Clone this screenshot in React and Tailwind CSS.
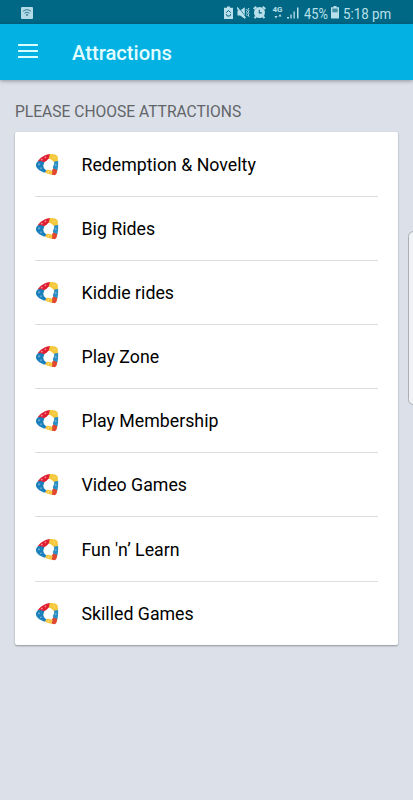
const attractions = [
  "Redemption & Novelty",
  "Big Rides",
  "Kiddie rides",
  "Play Zone",
  "Play Membership",
  "Video Games",
  "Fun 'n’ Learn",
  "Skilled Games",
];

function Logo() {
  return (
    <svg className="w-6 h-[23px] shrink-0" viewBox="0 0 24 23">
      <path d="M2.6 8.4C5 4.8 10 1.5 15.4 1l-.6 3.5-3.2 3.2-2.6 1.6-4 .2z" fill="#e01f33" />
      <path d="M14.8 1.1c3.7-.6 7.5.2 8 3.1l.2 4.5-3.8.6-3-2.7-2.4-.8z" fill="#f5c83e" />
      <path d="M19.2 8.6l3.9-.7c.2 3.7 0 7.2-.9 10.1l-3.6-1.3-.8-2.5 1.3-2.9z" fill="#2b8fc4" />
      <path d="M18.2 15.6l4 1.5c-.3 3.2-1.1 5-2.6 5.1l-3.4-.7.6-3.7z" fill="#e0482f" />
      <path d="M10.6 17.3l3-.6 3.9 1.2-.6 3.7c-2.6-.1-5-.9-7.1-2.1z" fill="#f5c840" />
      <path d="M.9 12.2C1 9.4 2.8 7.6 5.2 8l4.2 1.3-1.2 3.5.8 2.5 2.3 2.2-1.5 2.2C6 18.6 1 15.7.9 12.2z" fill="#1b80bb" />
      <g fill="#fff" opacity=".5">
        <circle cx="6.8" cy="6.6" r=".9" />
        <circle cx="10.4" cy="4.4" r=".8" />
        <circle cx="4" cy="11.4" r=".8" />
        <circle cx="6" cy="15.3" r=".8" />
        <circle cx="20.8" cy="12" r=".8" />
        <circle cx="19.2" cy="4.6" r=".7" />
        <circle cx="13.3" cy="19.2" r=".7" />
      </g>
    </svg>
  );
}

function StatusBar() {
  return (
    <div className="h-6 bg-[#006785] flex items-center text-[#b9e0ea] pl-[21px] pt-px">
      <svg className="w-3 h-3 shrink-0" viewBox="0 0 12 12">
        <rect width="12" height="12" rx="1" fill="#b3dbe5" />
        <g fill="none" stroke="#347f94">
          <path d="M2 4.3q4-3.2 8 0M3.5 6.2q2.5-2 5 0" />
          <path d="M4.9 7.8q1.1-.8 2.2 0L6 9z" fill="#347f94" strokeWidth=".5" />
        </g>
      </svg>

      {/* Battery saver */}
      <svg className="w-[9px] h-[13px] ml-[191px] shrink-0" viewBox="0 0 9 13">
        <path d="M3 .5h3v1.3h3V13H0V1.8h3z" fill="currentColor" />
        <path d="M2.3 6.7L4.5 4.4l2.2 2.3M2.3 8.2l.9 1.8h2.6l.9-1.8" fill="none" stroke="#006785" />
      </svg>

      {/* Vibrate / muted */}
      <svg className="w-[13px] h-3 ml-[4px] shrink-0" viewBox="0 0 13 12">
        <path d="M.5 3.5h2.6L7.8.3v11.4L3.1 8.5H.5z" fill="currentColor" />
        <path d="M1.6.3l7 9.4" stroke="#006785" strokeWidth=".8" />
        <path d="M0 .5l8.4 10.8" stroke="currentColor" strokeWidth="1.5" />
        <path d="M9.4 2l1 1.3-1 1.4 1 1.4-1 1.4 1 1.4M12 1l-.8 1.4.8 1.4-.8 1.4.8 1.4-.8 1.4.8 1.8" fill="none" stroke="currentColor" />
      </svg>

      {/* Alarm */}
      <svg className="w-[13px] h-[13px] ml-[3px] shrink-0" viewBox="0 0 13 13">
        <path d="M.7 3L3.3.8M12.3 3L9.7.8M3 10.5L1.5 12.2M10 10.5l1.5 1.7" stroke="currentColor" strokeWidth="2" />
        <circle cx="6.5" cy="6.6" r="5.5" fill="currentColor" />
        <path d="M6.3 3.7v3.2h2.6" fill="none" stroke="#006785" strokeWidth="1.1" />
      </svg>

      <div className="ml-[6px] w-[11px] h-[13px] flex flex-col items-center shrink-0">
        <span className="text-[8px] leading-[7px] font-bold">4G</span>
        <svg className="w-[8px] h-[5px] mt-px" viewBox="0 0 8 5">
          <path d="M.5 2h3L2 4.5zM4.5 2.5h3L6 0z" fill="currentColor" />
        </svg>
      </div>

      <svg className="w-3 h-3 ml-[4px] shrink-0" viewBox="0 0 12 12">
        <path d="M0 10h2v1.5H0zM3.4 7.5h1.3v4H3.4zM6.5 4.5h1.3v7H6.5zM10 .5h1.5v11H10z" fill="currentColor" />
      </svg>

      <div className="ml-[5px] w-[25px] shrink-0 pt-[2px]">
        <span className="inline-block origin-left scale-x-[0.83] text-[15.5px] leading-5 whitespace-nowrap">45%</span>
      </div>
      <svg className="w-2 h-[13px] ml-[2px] shrink-0" viewBox="0 0 8 13">
        <path d="M2.5 0h3v1.2H8V12.5H0V1.2h2.5z" fill="currentColor" />
        <path d="M1.3 2.5h5.4v3.8H1.3z" fill="#438fa3" />
      </svg>
      <div className="ml-[4px] w-[48px] shrink-0 pt-[2px]">
        <span className="inline-block origin-left scale-x-[0.86] text-[15.5px] leading-5 whitespace-nowrap">5:18 pm</span>
      </div>
    </div>
  );
}

export default function App() {
  return (
    <div className="relative w-full h-[800px] overflow-hidden bg-[#dce0e9] font-['Roboto',sans-serif]">
      <StatusBar />

      <header className="relative h-14 bg-[#03b2e3] flex items-center shadow-[0_1px_4px_rgba(0,0,0,0.35)]">
        <button className="ml-[18px] flex w-5 flex-col gap-[4px] pb-[2px]" aria-label="Menu">
          <span className="h-[2px] w-full bg-[#d8fdff]" />
          <span className="h-[2px] w-full bg-[#d8fdff]" />
          <span className="h-[2px] w-full bg-[#d8fdff]" />
        </button>
        <h1 className="ml-[34px] pt-px text-[20.2px] leading-6 font-medium text-[#e2fcff]">Attractions</h1>
      </header>

      <main className="px-[15px] pt-[22px]">
        <h2 className="text-[15.6px] leading-5 text-[#626568] whitespace-nowrap">PLEASE CHOOSE ATTRACTIONS</h2>
        <ul className="mt-[10px] rounded-[2px] bg-white px-5 pt-[0.6px] shadow-[0_1px_2px_rgba(0,0,0,0.35)]">
          {attractions.map((name) => (
            <li key={name} className="flex h-[64.15px] items-center border-b border-[#dcdddd] last:h-[63px] last:border-b-0">
              <Logo />
              <span className="ml-[22.5px] pt-px text-[17.75px] leading-6 text-black">{name}</span>
            </li>
          ))}
        </ul>
      </main>

      {/* Edge panel handle, hanging over the right side */}
      <div className="absolute top-[231px] -right-[6px] h-[174px] w-[11px] rounded-[6px] border border-[#a9afb5] bg-[#f1f2f3]" />
    </div>
  );
}
